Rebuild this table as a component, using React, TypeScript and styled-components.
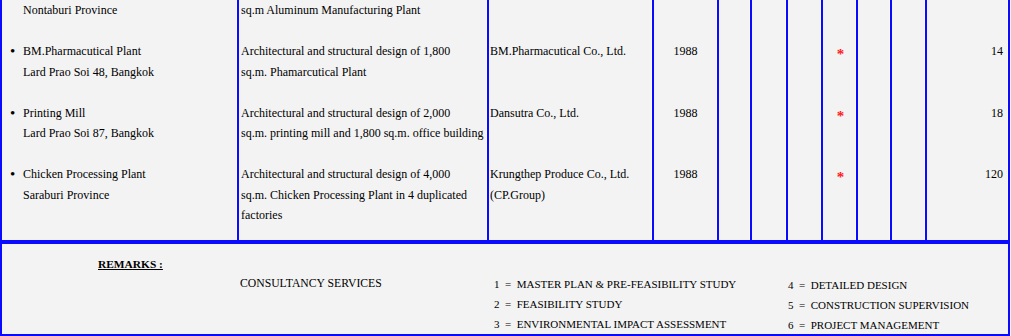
import React from "react";
import styled, { createGlobalStyle } from "styled-components";

const BLUE = "#0a0aff";

const GlobalStyle = createGlobalStyle`
  html, body {
    margin: 0;
    padding: 0;
    background: #f3f3f3;
  }
  body {
    font-family: "Liberation Serif", "Times New Roman", serif;
    color: #000;
    overflow: hidden;
  }
`;

const Page = styled.div`
  width: 1010px;
`;

const Table = styled.div`
  display: grid;
  grid-template-columns: 237px 250px 165px 65px 33px 36px 35px 35px 34px 35px 83px;
  border-left: 2px solid ${BLUE};
  border-bottom: 2px solid ${BLUE};
  font-size: 12px;
  line-height: 20.5px;
`;

const Cell = styled.div<{ $align?: "left" | "center" | "right"; $last?: boolean; $inset?: number }>`
  border-right: 2px solid ${BLUE};
  box-shadow: inset -1px 0 0 #fbfbfb;
  padding: 0 ${(p) => (p.$align === "right" ? 5 : 0)}px ${(p) => (p.$last ? 14.5 : 20.5)}px
    ${(p) => p.$inset ?? 0}px;
  text-align: ${(p) => p.$align ?? "left"};
  white-space: nowrap;
`;

const Line = styled.div<{ $indent?: number }>`
  padding-left: ${(p) => p.$indent ?? 0}px;
`;

const BulletLine = styled.div`
  display: flex;
  align-items: center;
  padding-left: 8px;
`;

const Bullet = styled.span`
  width: 13px;
  flex: none;
  font-size: 15px;
  line-height: 20px;
`;

const Star = styled.span`
  display: inline-block;
  color: #ff1a1a;
  font-size: 15px;
  font-weight: bold;
  transform: translate(1px, 3px);
`;

const Remarks = styled.div`
  display: grid;
  grid-template-columns: 238px 254px 294px 220px;
  grid-template-rows: repeat(4, 20px);
  border: 2px solid ${BLUE};
  padding-top: 10px;
  font-size: 11px;
  line-height: 20px;
  white-space: nowrap;
`;

const RemarksTitle = styled.div`
  grid-column: 1;
  grid-row: 1;
  padding-left: 96px;
  font-size: 11.4px;
  font-weight: bold;
  text-decoration: underline;
`;

const ServicesLabel = styled.div`
  grid-column: 2;
  grid-row: 2;
  font-size: 11.7px;
`;

const ServiceItem = styled.div<{ $col: number; $row: number }>`
  grid-column: ${(p) => p.$col};
  grid-row: ${(p) => p.$row};
  padding-top: ${(p) => (p.$col === 4 ? 1 : 0)}px;
`;

type Row = {
  bullet: boolean;
  project: string[];
  desc: string[];
  client: string[];
  year?: string;
  services: number[];
  value?: string;
};

const rows: Row[] = [
  {
    bullet: false,
    project: ["Nontaburi Province"],
    desc: ["sq.m Aluminum Manufacturing Plant"],
    client: [],
    services: [],
  },
  {
    bullet: true,
    project: ["BM.Pharmacutical Plant", "Lard Prao Soi 48, Bangkok"],
    desc: ["Architectural and structural design of 1,800", "sq.m. Phamarcutical Plant"],
    client: ["BM.Pharmacutical Co., Ltd."],
    year: "1988",
    services: [4],
    value: "14",
  },
  {
    bullet: true,
    project: ["Printing Mill", "Lard Prao Soi 87, Bangkok"],
    desc: ["Architectural and structural design of 2,000", "sq.m. printing mill and 1,800 sq.m. office building"],
    client: ["Dansutra Co., Ltd."],
    year: "1988",
    services: [4],
    value: "18",
  },
  {
    bullet: true,
    project: ["Chicken Processing Plant", "Saraburi Province"],
    desc: [
      "Architectural and structural design of 4,000",
      "sq.m. Chicken Processing Plant in 4 duplicated",
      "factories",
    ],
    client: ["Krungthep Produce Co., Ltd.", "(CP.Group)"],
    year: "1988",
    services: [4],
    value: "120",
  },
];

const services = [
  "MASTER PLAN & PRE-FEASIBILITY STUDY",
  "FEASIBILITY STUDY",
  "ENVIRONMENTAL IMPACT ASSESSMENT",
  "DETAILED DESIGN",
  "CONSTRUCTION SUPERVISION",
  "PROJECT MANAGEMENT",
];

const ProjectRow: React.FC<{ row: Row; last: boolean }> = ({ row, last }) => (
  <>
    <Cell $last={last}>
      {row.project.map((text, i) =>
        i === 0 && row.bullet ? (
          <BulletLine key={i}>
            <Bullet>•</Bullet>
            {text}
          </BulletLine>
        ) : (
          <Line key={i} $indent={21}>
            {text}
          </Line>
        )
      )}
    </Cell>
    <Cell $last={last} $inset={2}>
      {row.desc.map((text, i) => (
        <Line key={i}>{text}</Line>
      ))}
    </Cell>
    <Cell $last={last} $inset={1}>
      {row.client.map((text, i) => (
        <Line key={i}>{text}</Line>
      ))}
    </Cell>
    <Cell $last={last} $align="center">
      {row.year}
    </Cell>
    {[1, 2, 3, 4, 5, 6].map((n) => (
      <Cell key={n} $last={last} $align="center">
        {row.services.includes(n) ? <Star>*</Star> : null}
      </Cell>
    ))}
    <Cell $last={last} $align="right">
      {row.value}
    </Cell>
  </>
);

export default function App() {
  return (
    <Page>
      <GlobalStyle />
      <Table>
        {rows.map((row, i) => (
          <ProjectRow key={i} row={row} last={i === rows.length - 1} />
        ))}
      </Table>
      <Remarks>
        <RemarksTitle>REMARKS :</RemarksTitle>
        <ServicesLabel>CONSULTANCY SERVICES</ServicesLabel>
        {services.map((label, i) => (
          <ServiceItem key={i} $col={i < 3 ? 3 : 4} $row={(i % 3) + 2}>
            {`${i + 1}\u00a0\u00a0=\u00a0\u00a0${label}`}
          </ServiceItem>
        ))}
      </Remarks>
    </Page>
  );
}
